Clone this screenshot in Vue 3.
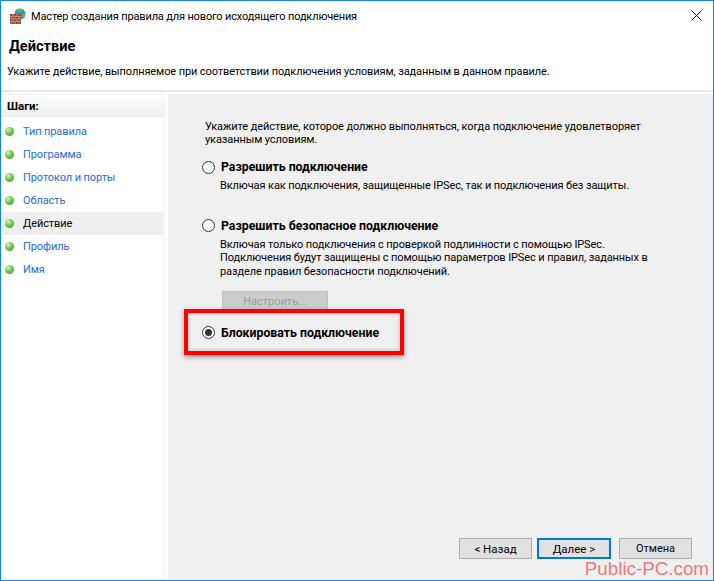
<template>
  <div class="window">
    <div class="titlebar">
      <svg class="appicon" width="17" height="16" viewBox="0 0 17 16">
        <circle cx="11" cy="6" r="5.500" fill="#2f8fd8" />
        <path d="M7.500 2.500c2-2.500 5.500-2 6.500 0l-2 2-3-.5zM12.500 7.500l3.500-2c.500 2-.5 4-2 5z" fill="#5cb83c" />
        <rect x="1" y="6" width="11" height="10" fill="#8f4a36" />
        <path d="M1 8.500h11M1 11h11M1 13.500h11M4 6v2.500M8 6v2.500M2.500 8.500V11M6 8.500V11M10 8.500V11M4 11v2.500M8 11v2.500M2.500 13.500V16M6 13.500V16M10 13.500V16" stroke="#c98a74" stroke-width="1" fill="none" />
      </svg>
      <span class="title">Мастер создания правила для нового исходящего подключения</span>
      <svg class="close" width="11" height="11" viewBox="0 0 11 11">
        <path d="M.5.5l10 10M10.500.5l-10 10" stroke="#111" stroke-width="1" fill="none" />
      </svg>
    </div>
    <div class="header">
      <h1>Действие</h1>
      <p>Укажите действие, выполняемое при соответствии подключения условиям, заданным в данном правиле.</p>
    </div>
    <div class="body">
      <aside class="steps">
        <div class="steps-head">Шаги:</div>
        <ul>
          <li v-for="step in steps" :key="step" :class="{ current: step === 'Действие' }">
            <i class="dot"></i>
            <span>{{ step }}</span>
          </li>
        </ul>
      </aside>
      <main class="content">
        <div class="form">
          <p class="intro">Укажите действие, которое должно выполняться, когда подключение удовлетворяет<br>указанным условиям.</p>
          <div class="option first">
            <div class="radio-row"><i class="radio"></i><b>Разрешить подключение</b></div>
            <p>Включая как подключения, защищенные IPSec, так и подключения без защиты.</p>
          </div>
          <div class="option second">
            <div class="radio-row"><i class="radio"></i><b>Разрешить безопасное подключение</b></div>
            <p>Включая только подключения с проверкой подлинности с помощью IPSec.<br>Подключения будут защищены с помощью параметров IPSec и правил, заданных в<br>разделе правил безопасности подключений.</p>
            <button class="setup" disabled>Настроить...</button>
          </div>
          <div class="option third">
            <div class="radio-row"><i class="radio checked"></i><b>Блокировать подключение</b></div>
          </div>
        </div>
        <div class="buttons">
          <button class="btn">&lt; Назад</button>
          <button class="btn default">Далее &gt;</button>
          <button class="btn cancel">Отмена</button>
        </div>
      </main>
    </div>
    <div class="highlight"></div>
    <div class="watermark">Public-PC.com</div>
  </div>
</template>

<script setup>
const steps = ['Тип правила', 'Программа', 'Протокол и порты', 'Область', 'Действие', 'Профиль', 'Имя']
</script>

<style>
html, body {
  margin: 0;
  background: #f0f0f0;
}
</style>

<style scoped>
.window {
  position: relative;
  box-sizing: border-box;
  width: 714px;
  height: 581px;
  border: 1px solid #1883d7;
  background: #fff;
  display: flex;
  flex-direction: column;
  font-family: Roboto, "Open Sans", sans-serif;
  font-size: 11px;
  letter-spacing: -0.1px;
  color: #000;
  overflow: hidden;
}
.titlebar {
  height: 29px;
  display: flex;
  align-items: center;
  padding: 0 11px 0 8px;
  flex-shrink: 0;
}
.appicon {
  margin-right: 5px;
}
.title {
  letter-spacing: -0.15px;
  flex: 1;
  margin-top: 1px;
}
.header {
  height: 60px;
  flex-shrink: 0;
  border-bottom: 2px solid #e9e9e9;
}
.header h1 {
  margin: 7px 0 0 8px;
  font-size: 14.6px;
  letter-spacing: 0;
  line-height: 18px;
  font-weight: 700;
}
.header p {
  margin: 9px 0 0 6px;
  line-height: 16px;
}
.body {
  flex: 1;
  display: flex;
  padding-top: 2px;
  background: #fff;
}
.steps {
  width: 164px;
  flex-shrink: 0;
  box-sizing: border-box;
  border: 1px solid #f0f0f0;
  border-left: 0;
  margin-right: 3px;
}
.steps-head {
  height: 22px;
  line-height: 22px;
  padding-left: 6px;
  font-size: 11.5px;
  letter-spacing: 0;
  font-weight: 700;
  background: linear-gradient(#ffffff, #ececec);
}
.steps ul {
  list-style: none;
  margin: 3px 0 0;
  padding: 0;
}
.steps li {
  height: 23px;
  display: flex;
  align-items: center;
  padding-left: 4px;
  margin-right: 1px;
  color: #2a6ad8;
}
.steps li.current {
  background: #efefef;
  color: #000;
}
.dot {
  width: 9px;
  height: 9px;
  border-radius: 50%;
  margin-right: 9px;
  background: radial-gradient(circle at 35% 30%, #d7f0c4, #63c63d 50%, #3f9a2a);
}
.content {
  flex: 1;
  background: #f0f0f0;
  display: flex;
  flex-direction: column;
  justify-content: space-between;
}
.form {
  padding: 26px 20px 0 37px;
}
.intro {
  margin: 0;
  line-height: 13px;
}
.option p {
  margin: 4px 0 0 18px;
  line-height: 13.5px;
}
.first {
  margin-top: 13px;
  margin-left: -3px;
}
.second {
  margin-top: 25px;
  margin-left: -3px;
}
.third {
  margin-top: 12px;
  margin-left: -3px;
}
.radio-row {
  display: flex;
  align-items: center;
  height: 16px;
}
.radio-row b {
  font-size: 12.3px;
  letter-spacing: 0;
  font-weight: 700;
  margin-left: 6px;
}
.radio {
  box-sizing: border-box;
  width: 13px;
  height: 13px;
  border-radius: 50%;
  border: 1px solid #333;
  background: #fff;
  position: relative;
}
.radio.checked::after {
  content: "";
  position: absolute;
  left: 2px;
  top: 2px;
  width: 7px;
  height: 7px;
  border-radius: 50%;
  background: #333;
}
.setup {
  display: block;
  width: 106px;
  height: 22px;
  margin: 12.500px 0 0 20px;
  border: 1px solid #bfbfbf;
  background: #cccccc;
  color: #9b9b9b;
  font: inherit;
  padding: 0;
}
.buttons {
  display: flex;
  justify-content: flex-end;
  padding-right: 21px;
  margin-bottom: 21px;
}
.btn {
  width: 73px;
  height: 21px;
  box-sizing: border-box;
  border: 1px solid #adadad;
  background: #e1e1e1;
  font: inherit;
  font-size: 11.5px;
  color: #000;
  padding: 0;
}
.btn.default {
  width: 74px;
  margin-left: 5px;
  margin-right: 8px;
  border: 2px solid #0078d7;
}
.btn.cancel {
  font-size: 11px;
}
.highlight {
  position: absolute;
  left: 183px;
  top: 308px;
  width: 220px;
  height: 46px;
  box-sizing: border-box;
  border: 4px solid #ff0000;
  box-shadow: 0 2px 5px rgba(0, 0, 0, 0.4), inset 0 0 4px rgba(0, 0, 0, 0.25);
}
.watermark {
  position: absolute;
  right: 4px;
  bottom: 1px;
  font-family: "Liberation Sans", Arial, sans-serif;
  font-size: 18.800px;
  letter-spacing: 0;
  line-height: 21px;
  color: #ec7a7a;
}
</style>
